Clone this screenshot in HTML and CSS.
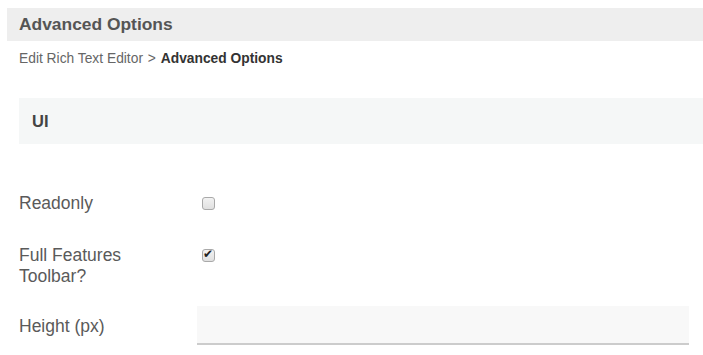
FILE: index.html
```html
<!DOCTYPE html>
<html lang="en">
<head>
    <meta charset="UTF-8">
    <meta name="viewport" content="width=device-width, initial-scale=1.0">
    <title>Advanced Options</title>
    <link rel="stylesheet" href="styles.css">
</head>
<body>

    <div class="page">
        <header class="page-title">Advanced Options</header>

        <div class="breadcrumb">
            <span class="crumb">Edit Rich Text Editor</span>
            <span class="sep">&gt;</span>
            <span class="crumb current">Advanced Options</span>
        </div>

        <div class="section">
            <div class="section-head">UI</div>

            <div class="form-row first">
                <label class="field-label" for="readonly">Readonly</label>
                <div class="field">
                    <input type="checkbox" id="readonly" class="check">
                </div>
            </div>

            <div class="form-row second">
                <label class="field-label" for="full-toolbar">Full Features Toolbar?</label>
                <div class="field">
                    <input type="checkbox" id="full-toolbar" class="check" checked>
                </div>
            </div>

            <div class="form-row third">
                <label class="field-label pad" for="height">Height (px)</label>
                <div class="field">
                    <input type="text" id="height" class="text-input">
                </div>
            </div>
        </div>
    </div>

</body>
</html>
```

FILE: styles.css
```css
body {
    font-family: 'Liberation Sans', Arial, Helvetica, sans-serif;
    background-color: #fff;
    margin: 0;
    padding: 0;
    color: #555;
}

.page {
    padding: 8px 0 0 7px;
}

.page-title {
    background-color: #eeeeee;
    height: 33px;
    line-height: 33px;
    padding-left: 12px;
    font-size: 17.4px;
    font-weight: bold;
    color: #555;
}

.breadcrumb {
    margin-top: 9px;
    padding-left: 12px;
    font-size: 13.8px;
    line-height: 17px;
    color: #666;
}

.breadcrumb .sep {
    margin: 0 1px;
}

.breadcrumb .current {
    font-weight: bold;
    color: #333;
}

.section {
    padding-left: 12px;
}

.section-head {
    margin-top: 31px;
    background-color: #f5f7f7;
    height: 46px;
    line-height: 46px;
    padding-left: 13px;
    font-size: 16.5px;
    font-weight: bold;
    color: #444;
}

.form-row {
    display: flex;
    align-items: flex-start;
}

.form-row.first {
    margin-top: 49px;
}

.form-row.second {
    margin-top: 31px;
}

.form-row.third {
    margin-top: 19px;
}

.field-label {
    width: 140px;
    margin-right: 38px;
    font-size: 17.5px;
    line-height: 21px;
    color: #5a5a5a;
}

.field-label.pad {
    padding-top: 10px;
}

.field {
    flex: 1;
    padding-right: 14px;
}

.check {
    appearance: none;
    -webkit-appearance: none;
    position: relative;
    width: 13px;
    height: 13px;
    margin: 4px 0 0 5px;
    border: 1px solid #a9a9a9;
    border-radius: 3px;
    background: linear-gradient(#f2f2f2, #e0e0e0);
    box-sizing: border-box;
    display: block;
}

.check:checked::after {
    content: "\2714";
    position: absolute;
    left: 0;
    top: -3px;
    font-size: 12px;
    color: #222;
}

.text-input {
    display: block;
    width: 100%;
    height: 39px;
    box-sizing: border-box;
    border: none;
    border-bottom: 2px solid #cccccc;
    background-color: #f8f8f8;
    font-size: 16px;
    padding: 0 10px;
    outline: none;
}
```
